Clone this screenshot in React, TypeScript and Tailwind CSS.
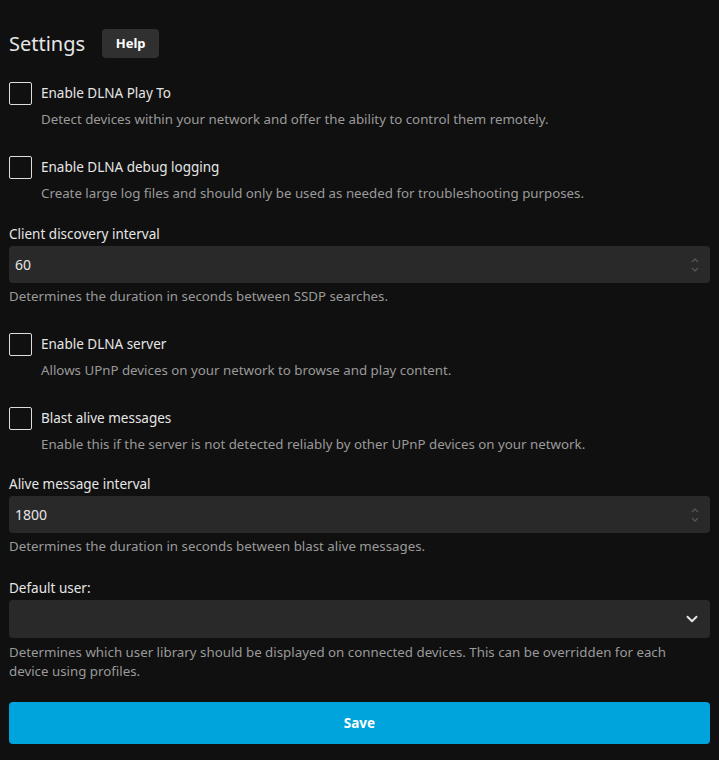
import { ChevronDown } from "lucide-react"

function CheckRow({ label, desc, className }: { label: string; desc: string; className?: string }) {
    return (
        <div className={"flex flex-col " + (className ?? "")}>
            <label className="flex items-center h-[24px]">
                <span className="w-[23px] h-[23px] rounded-[2px] border-[1.5px] border-[#dddddd] shrink-0" />
                <span className="ml-[9px] text-[13.5px] text-[#e6e6e6] leading-[20px]">{label}</span>
            </label>
            <p className="ml-[32px] mt-[4px] text-[13.3px] text-[#9a9a9a] leading-[20px]">{desc}</p>
        </div>
    )
}

function NumberField({ label, value, desc, className }: { label: string; value: string; desc: string; className?: string }) {
    return (
        <div className={"flex flex-col " + (className ?? "")}>
            <label className="text-[13.5px] text-[#e6e6e6] leading-[20px]">{label}</label>
            <div className="mt-[2px] h-[37px] bg-[#292929] rounded-[4px] flex items-center justify-between pl-[6px] pr-[10px]">
                <span className="text-[14px] text-[#e6e6e6]">{value}</span>
                <svg width="10" height="18" viewBox="0 0 10 18" fill="none" stroke="#555" strokeWidth="1.3">
                    <path d="M2 6 L5 3 L8 6" />
                    <path d="M2 12 L5 15 L8 12" />
                </svg>
            </div>
            <p className="mt-[3px] text-[13.3px] text-[#9a9a9a] leading-[20px]">{desc}</p>
        </div>
    )
}

export default function App() {
    return (
        <div className="min-h-[760px] bg-[#101010] px-[9px] pt-[28px] pb-4" style={{ fontFamily: '"Noto Sans", sans-serif' }}>
            <div className="flex items-center h-[31px]">
                <h2 className="text-[20px] text-[#e6e6e6] font-normal">Settings</h2>
                <button className="ml-[17px] h-[29px] w-[57px] bg-[#303030] rounded-[4px] text-[13px] font-bold text-white">Help</button>
            </div>

            <CheckRow className="mt-[22px]" label="Enable DLNA Play To" desc="Detect devices within your network and offer the ability to control them remotely." />
            <CheckRow className="mt-[26px]" label="Enable DLNA debug logging" desc="Create large log files and should only be used as needed for troubleshooting purposes." />

            <NumberField className="mt-[21px]" label="Client discovery interval" value="60" desc="Determines the duration in seconds between SSDP searches." />

            <CheckRow className="mt-[26px]" label="Enable DLNA server" desc="Allows UPnP devices on your network to browse and play content." />
            <CheckRow className="mt-[26px]" label="Blast alive messages" desc="Enable this if the server is not detected reliably by other UPnP devices on your network." />

            <NumberField className="mt-[20px]" label="Alive message interval" value="1800" desc="Determines the duration in seconds between blast alive messages." />

            <div className="mt-[22px] flex flex-col">
                <label className="text-[13.5px] text-[#e6e6e6] leading-[20px]">Default user:</label>
                <div className="mt-[2px] h-[38px] bg-[#292929] rounded-[4px] flex items-center justify-end pr-[9px]">
                    <ChevronDown size={18} strokeWidth={2.5} className="text-[#e6e6e6]" />
                </div>
                <p className="mt-[5px] pr-[40px] text-[13.3px] text-[#9a9a9a] leading-[19px]">
                    Determines which user library should be displayed on connected devices. This can be overridden for each device using profiles.
                </p>
            </div>

            <button className="mt-[21px] w-full h-[42px] bg-[#00a4dc] rounded-[4px] text-[13.5px] font-bold text-white">Save</button>
        </div>
    )
}
